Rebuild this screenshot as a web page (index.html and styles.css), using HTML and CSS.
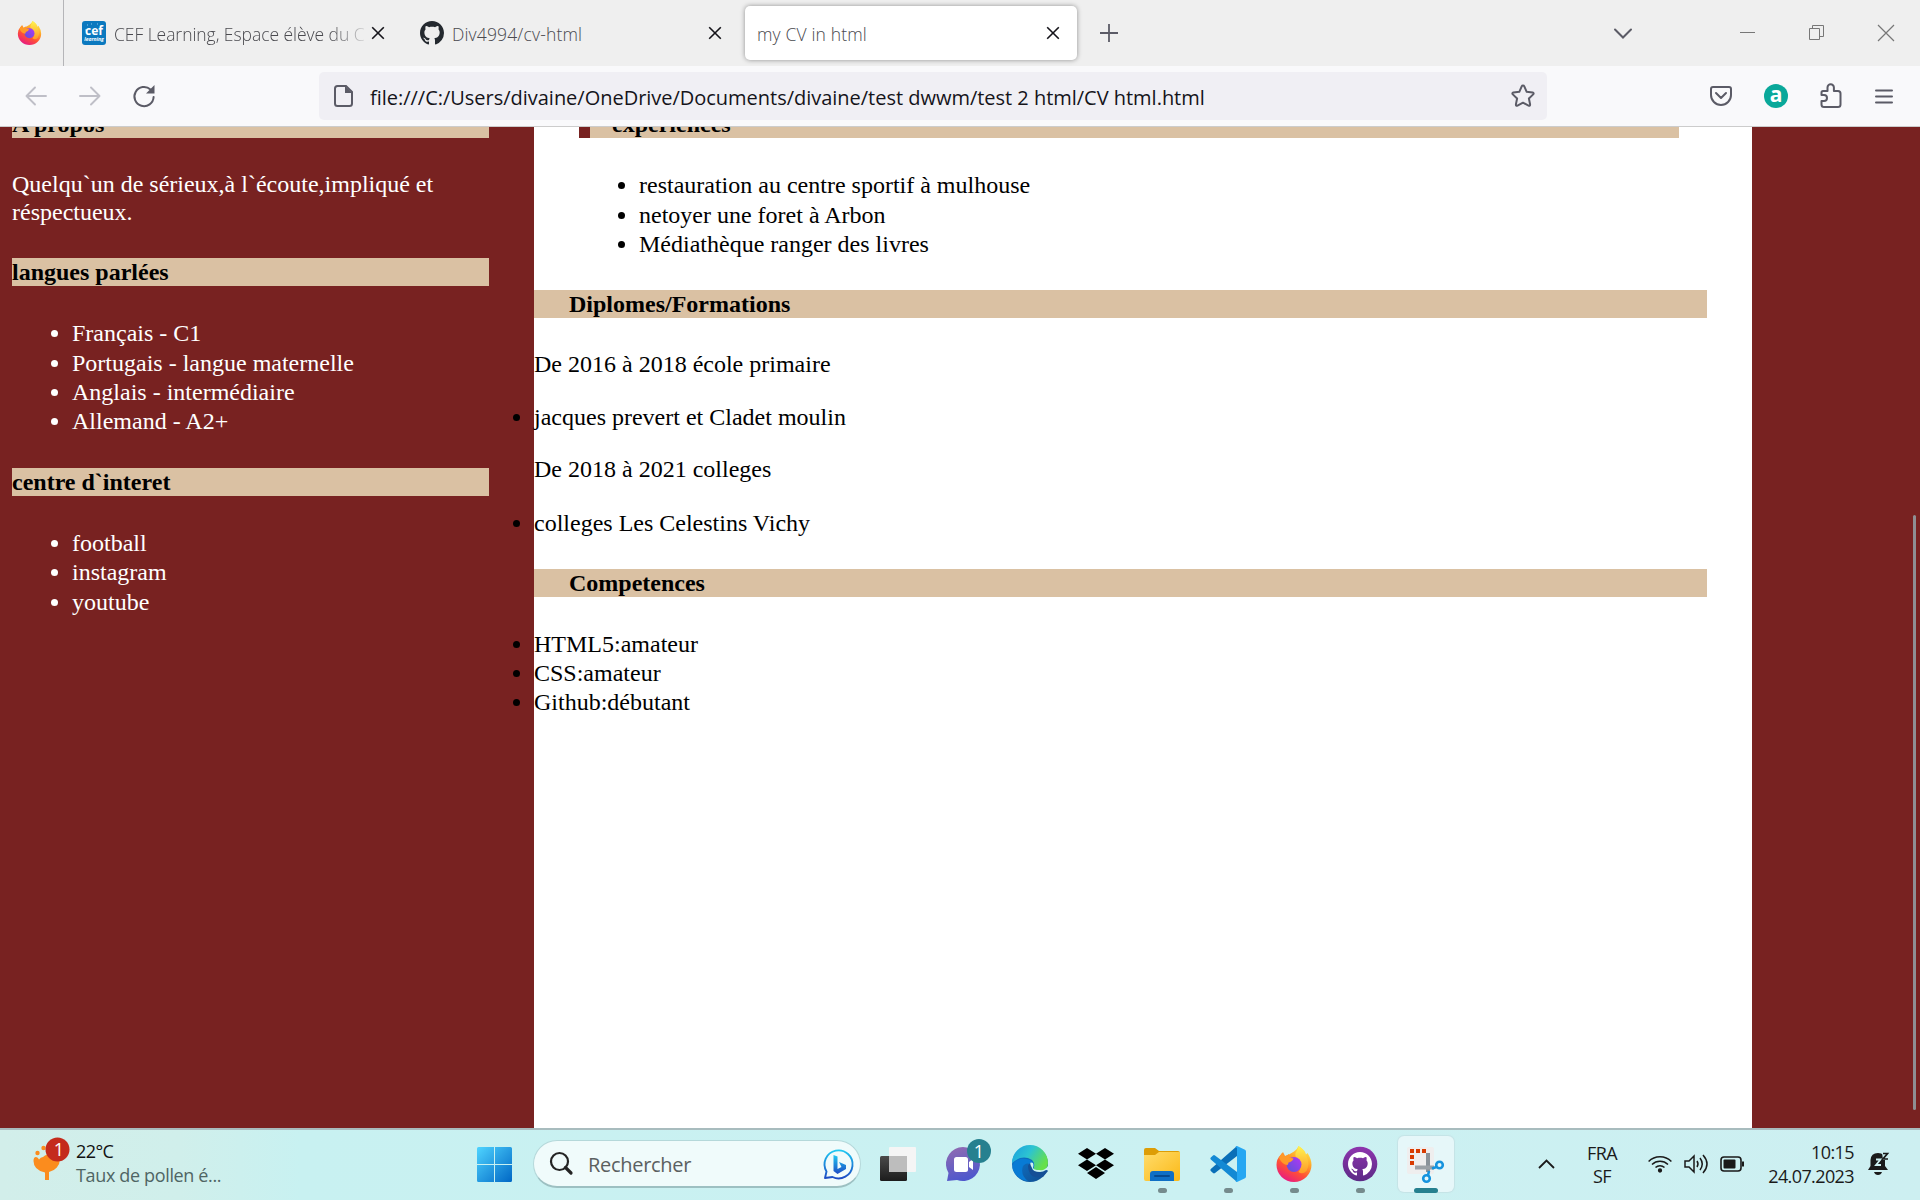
FILE: index.html
```html
<!DOCTYPE html>
<html lang="fr">
<head>
<meta charset="utf-8">
<title>my CV in html</title>
<link rel="stylesheet" href="styles.css">
</head>
<body>
<svg class="defs" width="0" height="0">
  <defs>
    <linearGradient id="ffBody" x1=".8" y1="0" x2=".25" y2="1"><stop offset="0" stop-color="#fff44f"/><stop offset=".35" stop-color="#ffa62a"/><stop offset=".65" stop-color="#ff5036"/><stop offset="1" stop-color="#e5158a"/></linearGradient>
    <linearGradient id="ffGlobe" x1="1" y1="0" x2="0" y2="1"><stop offset="0" stop-color="#b336f5"/><stop offset="1" stop-color="#5a53d8"/></linearGradient>
    <linearGradient id="ffFlame" x1="0" y1="0" x2="0" y2="1"><stop offset="0" stop-color="#fff44f"/><stop offset="1" stop-color="#ff9a28"/></linearGradient>
    <linearGradient id="win" x1="0" y1="0" x2="1" y2="1"><stop offset="0" stop-color="#4fd4ff"/><stop offset="1" stop-color="#0067c5"/></linearGradient>
    <linearGradient id="bing" x1="0" y1="0" x2="0" y2="1"><stop offset="0" stop-color="#1fc8f2"/><stop offset="1" stop-color="#1c4bc4"/></linearGradient>
    <linearGradient id="chat" x1="0" y1="0" x2=".3" y2="1"><stop offset="0" stop-color="#946cb0"/><stop offset="1" stop-color="#5058cc"/></linearGradient>
    <linearGradient id="edgeTop" x1="0" y1="0" x2="1" y2=".5"><stop offset="0" stop-color="#1a9de0"/><stop offset=".5" stop-color="#2cc3d2"/><stop offset="1" stop-color="#66e04a"/></linearGradient>
    <linearGradient id="edgeLow" x1="0" y1="0" x2="1" y2="1"><stop offset="0" stop-color="#0c7fd9"/><stop offset="1" stop-color="#114a8b"/></linearGradient>
    <linearGradient id="folder" x1="0" y1="0" x2="1" y2="1"><stop offset="0" stop-color="#ffdc6b"/><stop offset="1" stop-color="#fbb917"/></linearGradient>
    <linearGradient id="dark" x1="0" y1="0" x2="0" y2="1"><stop offset="0" stop-color="#4a4a4a"/><stop offset="1" stop-color="#1c1c1c"/></linearGradient>
    <linearGradient id="gh" x1="0" y1="0" x2="0" y2="1"><stop offset="0" stop-color="#8e35ae"/><stop offset="1" stop-color="#5c2a86"/></linearGradient>
    <symbol id="firefox" viewBox="0 0 36 36">
      <path d="M4.500 9 7 6l2 4 4-1.500 5-3Q21 4 22.500 0q6 3.500 7 9l2-2q4 6 4 12A17.500 17 0 0 1 .5 19Q.5 13 4.500 9z" fill="url(#ffBody)"/>
      <path d="M22.500 0q7 4 8 10 4 8 0 15-4 4-8 1 4-5 1-10-5-4-4-9 2-3 3-7z" fill="url(#ffFlame)"/>
      <circle cx="18" cy="18.500" r="7.500" fill="url(#ffGlobe)"/>
      <path d="M3 12 6 7l3 3.500 4-2.500v3.500l4.500 1q-1 3-5 4 0 1-1 2.500-5 0-8.500-7z" fill="#ff9a28"/>
    </symbol>
    <symbol id="octocat" viewBox="0 0 16 16"><path d="M8 0C3.580 0 0 3.580 0 8c0 3.540 2.290 6.530 5.470 7.590.4.070.55-.17.55-.38 0-.19-.01-.82-.01-1.490-2.010.37-2.530-.49-2.690-.94-.09-.23-.48-.94-.82-1.130-.28-.15-.68-.52-.01-.53.63-.01 1.080.58 1.230.82.72 1.210 1.870.87 2.330.66.070-.52.28-.87.51-1.070-1.780-.2-3.640-.89-3.640-3.950 0-.87.31-1.590.82-2.150-.08-.2-.36-1.020.08-2.120 0 0 .67-.21 2.200.82.64-.18 1.320-.27 2-.27s1.360.09 2 .27c1.530-1.040 2.200-.82 2.200-.82.44 1.100.16 1.920.08 2.120.51.56.82 1.270.82 2.150 0 3.070-1.870 3.750-3.650 3.950.29.25.54.73.54 1.480 0 1.070-.01 1.930-.01 2.200 0 .21.15.46.55.38A8.010 8.010 0 0 0 16 8c0-4.420-3.580-8-8-8z"/></symbol>
    <symbol id="cross" viewBox="0 0 14 14"><path d="M1.200 1.200l11.600 11.600M12.800 1.200L1.200 12.800" fill="none" stroke="#15141a" stroke-width="1.600"/></symbol>
  </defs>
</svg>

<header class="tabs">
  <div class="pinned"><svg width="25" height="24"><use href="#firefox"/></svg></div>
  <div class="tab tab-cef">
    <svg width="24" height="24" viewBox="0 0 24 24"><rect width="24" height="24" rx="3" fill="#0b79bf"/><text x="12" y="14" class="cef-a">cef</text><text x="12" y="20" class="cef-b">learning</text><path d="M5 4h1M9 3h1M15 3h1M3 9h1" stroke="#8cc8ec"/></svg>
    <span class="title fade t1">CEF Learning, Espace élève du C</span>
    <svg class="x" width="14" height="14"><use href="#cross"/></svg>
  </div>
  <div class="tab tab-git">
    <svg width="24" height="24" fill="#24292f"><use href="#octocat"/></svg>
    <span class="title t2">Div4994/cv-html</span>
    <svg class="x" width="14" height="14"><use href="#cross"/></svg>
  </div>
  <div class="tab active">
    <span class="title t3">my CV in html</span>
    <svg class="x" width="14" height="14"><use href="#cross"/></svg>
  </div>
  <svg class="plus" width="18" height="18" viewBox="0 0 18 18"><path d="M9 0v18M0 9h18" stroke="#5b5b66" stroke-width="1.800"/></svg>
  <div class="window">
    <svg class="list" width="18" height="11" viewBox="0 0 18 11"><path d="M1 1.500l8 8 8-8" fill="none" stroke="#5b5b66" stroke-width="2" stroke-linecap="round"/></svg>
    <svg width="16" height="16"><path d="M0 7.500h15" stroke="#777"/></svg>
    <svg width="16" height="16" fill="none" stroke="#777"><path d="M.5 3.500h10v11H.5zM3.500 3.500v-3h11v11h-4"/></svg>
    <svg width="16" height="16"><path d="M0 0l16 16M16 0L0 16" stroke="#777" stroke-width="1.200"/></svg>
  </div>
</header>

<nav class="toolbar">
  <svg class="back" width="22" height="20" viewBox="0 0 22 20" fill="none" stroke="#bfbfc7" stroke-width="1.900" stroke-linecap="round" stroke-linejoin="round"><path d="M21 10H1.500M10 1.500L1.500 10l8.500 8.500"/></svg>
  <svg class="fwd" width="22" height="20" viewBox="0 0 22 20" fill="none" stroke="#bfbfc7" stroke-width="1.900" stroke-linecap="round" stroke-linejoin="round"><path d="M1 10h19.500M12 1.500l8.500 8.500-8.500 8.500"/></svg>
  <svg class="reload" width="24" height="24" viewBox="0 0 24 24"><path d="M18.500 5.500A9.600 9.600 0 1 0 21.600 13" fill="none" stroke="#5b5b66" stroke-width="2" stroke-linecap="round"/><path d="M22.500 1v8.500H14z" fill="#5b5b66"/></svg>
  <div class="url">
    <svg width="20" height="22" viewBox="0 0 20 22"><path d="M3.500 1h8.500l6 6v11.500q0 2.500-2.500 2.500h-12Q1 21 1 18.500v-15Q1 1 3.500 1z" fill="none" stroke="#5b5b66" stroke-width="2"/><path d="M11 1v7h7z" fill="#5b5b66"/></svg>
    <span class="address">file:///C:/Users/divaine/OneDrive/Documents/divaine/test dwwm/test 2 html/CV html.html</span>
    <svg class="star" width="24" height="24" viewBox="0 0 24 24"><path d="M12 1.500q.9 0 1.300.9l2.400 5.400 5.900.7q1.700.5.6 1.900l-4.300 4.100 1.200 5.900q0 1.800-1.600 1.200L12 18.700l-5.500 2.900q-1.600.6-1.600-1.200l1.200-5.900-4.300-4.100q-1.100-1.400.6-1.900l5.900-.7 2.400-5.400q.4-.9 1.300-.9z" fill="none" stroke="#5b5b66" stroke-width="2" stroke-linejoin="round"/></svg>
  </div>
  <div class="extras">
    <svg width="22" height="20" viewBox="0 0 22 20" fill="none" stroke="#5b5b66" stroke-width="2" stroke-linecap="round" stroke-linejoin="round"><path d="M3 1h16q2 0 2 2v6a10 10 0 0 1-20 0V3q0-2 2-2zM6 7l5 5 5-5"/></svg>
    <span class="ext-a">a</span>
    <svg width="22" height="26" viewBox="0 0 22 26" fill="none" stroke="#5b5b66" stroke-width="2" stroke-linejoin="round"><path d="M3 8h4.500V4.500a3.200 3.200 0 0 1 6.400 0V8H18q2.500 0 2.500 2.500v11Q20.500 24 18 24H4q-2.500 0-2.500-2.500V18H4a3 3 0 0 0 0-6H1.500V9.500Q1.500 8 3 8z"/></svg>
    <svg width="18" height="15" viewBox="0 0 18 15"><path d="M1 1.500h16M1 7.500h16M1 13.500h16" stroke="#5b5b66" stroke-width="2" stroke-linecap="round"/></svg>
  </div>
</nav>

<main class="page">
  <aside class="side">
    <h4>A propos</h4>
    <p>Quelqu`un de sérieux,à l`écoute,impliqué et réspectueux.</p>
    <h4>langues parlées</h4>
    <ul>
      <li>Français - C1</li>
      <li>Portugais - langue maternelle</li>
      <li>Anglais - intermédiaire</li>
      <li>Allemand - A2+</li>
    </ul>
    <h4>centre d`interet</h4>
    <ul>
      <li>football</li>
      <li>instagram</li>
      <li>youtube</li>
    </ul>
  </aside>
  <section class="main">
    <div class="exp">
      <h4>experiences</h4>
      <ul>
        <li>restauration au centre sportif à mulhouse</li>
        <li>netoyer une foret à Arbon</li>
        <li>Médiathèque ranger des livres</li>
      </ul>
    </div>
    <h4>Diplomes/Formations</h4>
    <p>De 2016 à 2018 école primaire</p>
    <ul class="flush"><li>jacques prevert et Cladet moulin</li></ul>
    <p>De 2018 à 2021 colleges</p>
    <ul class="flush college"><li>colleges Les Celestins Vichy</li></ul>
    <h4 class="skills">Competences</h4>
    <ul class="flush">
      <li>HTML5:amateur</li>
      <li>CSS:amateur</li>
      <li>Github:débutant</li>
    </ul>
  </section>
  <div class="edge"><i class="thumb"></i></div>
</main>

<footer class="taskbar">
  <div class="weather">
    <svg width="38" height="44" viewBox="0 0 38 44"><path d="M.5 24q0-4 2.500-4 2 0 3 2.500Q7.500 20 10 20q3-3 8-3l9 5a13.500 13.500 0 0 1-11 13V43h-4v-7.500Q.5 33 .5 24z" fill="#fb8c1e"/><circle cx="4.500" cy="16" r="2.200" fill="#fb8c1e"/><circle cx="10.500" cy="11" r="2.200" fill="#fb8c1e"/><circle cx="24.500" cy="12.500" r="12" fill="#c42b1c"/><text x="26" y="18.500" class="badge">1</text></svg>
    <div class="lines"><span class="w1">22°C</span><span class="w2">Taux de pollen é...</span></div>
  </div>
  <svg class="start" width="35" height="35" viewBox="0 0 35 35"><path d="M1.500 0H17v17H0V1.500Q0 0 1.500 0zM18 0h15.500Q35 0 35 1.500V17H18zM0 18h17v17H1.500Q0 35 0 33.500zM18 18h17v15.500q0 1.500-1.500 1.500H18z" fill="url(#win)"/></svg>
  <div class="search">
    <svg width="23" height="23" viewBox="0 0 23 23" fill="none" stroke="#242424"><circle cx="9.500" cy="9.500" r="8.500" stroke-width="2.200"/><path d="M15.500 15.500l5.500 5.500" stroke-width="3.200" stroke-linecap="round"/></svg>
    <span>Rechercher</span>
    <svg class="bing" width="32" height="32" viewBox="0 0 32 32"><path d="M2 30l1.500-6.500A14 14 0 1 1 9.500 29z" fill="none" stroke="url(#bing)" stroke-width="1.900" stroke-linejoin="round"/><path d="M10.500 7l4 1.500v12.500l4-2-2.500-5 7 3v4L14.500 26l-4-3z" fill="url(#bing)"/></svg>
  </div>
  <div class="apps">
    <div class="app"><svg width="36" height="36" viewBox="0 0 36 36"><rect x="0" y="10" width="27" height="25" rx="1.500" fill="url(#dark)"/><rect x="9" y="1" width="27" height="25" rx="1" fill="#f5f5f5"/><path d="M9 10h18v16H9z" fill="#bdbdbd"/></svg></div>
    <div class="app chat"><svg width="36" height="36" viewBox="0 0 36 36"><path d="M1 35l1.500-8A17 17 0 1 1 11 34z" fill="url(#chat)"/><rect x="8" y="11" width="14" height="15" rx="2.500" fill="#fff"/><path d="M23 16l4-3v11l-4-3z" fill="#fff"/></svg><span class="count">1</span></div>
    <div class="app"><svg width="36" height="36" viewBox="0 0 36 36"><circle cx="18" cy="18" r="18" fill="url(#edgeLow)"/><path d="M0 17A18 18 0 0 1 36 17q0 7-7 8-7 1-8-2 3-5-1-9Q10 8 0 17z" fill="url(#edgeTop)"/><path d="M21 23Q17 14 11 20q-3 9 5 15-10-1-15-11-2-8 7-11 9-1 13 3 2 4 0 7z" fill="#087bd5"/><path d="M20 22q1 4 8 4 4 0 7-2l1 1-5 6Q17 34 16 20q1-3 4-3 2 2 0 5z" fill="#154f96"/><path d="M20 22q1 4 8 4 3 0 6-2h2v-4q-3 5-9 4-5 0-6-2 1-3 0-5-5-2-1 5z" fill="#cbf1f1"/></svg></div>
    <div class="app"><svg width="36" height="36" viewBox="0 0 36 36"><path d="M9 2l9 5.700-9 5.700-9-5.700zM27 2l9 5.700-9 5.700-9-5.700zM9 13.400l9 5.800-9 5.700-9-5.700zM27 13.400l9 5.800-9 5.700-9-5.700zM18 21l9 6-9 6-9-6z"/></svg></div>
    <div class="app"><svg width="36" height="36" viewBox="0 0 36 36"><path d="M0 4q0-2 2-2h9l4 3h19q2 0 2 2v6H0z" fill="#dd9d06"/><path d="M0 9h11l4-3h21v27q0 2-2 2H2q-2 0-2-2z" fill="url(#folder)"/><path d="M6 35V28q0-3 3-3h18q3 0 3 3v7z" fill="#0f6fc5"/><path d="M11 30h14" stroke="#064a8f" stroke-width="2" stroke-linecap="round"/></svg><i class="run"></i></div>
    <div class="app"><svg width="36" height="36" viewBox="0 0 36 36"><path d="M27 0v10L5 27q-1 .8-2 0l-2.200-2q-1-1 0-2z" fill="#0a6fb8"/><path d="M27 36V26L5 9.500q-1-.8-2 0l-2.200 2q-1 1 0 2z" fill="#1389d4"/><path d="M27 0l8 3.800q1 .6 1 1.700v25q0 1.100-1 1.700L27 36q-1 0-1.500-1l1.500-1V2L25.500 1Q26 0 27 0z" fill="#26a7f2"/></svg><i class="run"></i></div>
    <div class="app"><svg width="36" height="36"><use href="#firefox"/></svg><i class="run"></i></div>
    <div class="app"><svg width="36" height="36" viewBox="0 0 36 36"><circle cx="18" cy="18" r="17.300" fill="url(#gh)"/><svg x="6" y="6" width="24" height="24" fill="#fff"><use href="#octocat"/></svg></svg><i class="run"></i></div>
    <div class="app on"><svg width="38" height="38" viewBox="0 0 38 38"><rect x="0" y="1" width="27" height="27" rx="2" fill="#efeeee"/><path d="M3 3h4v4H3zM9 3h4v4H9zM15 3h4v4h-4zM3 9h4v4H3zM3 15h4v4H3z" fill="#d83b01"/><path d="M21 7v19" stroke="#8a9299" stroke-width="4"/><path d="M8 21.500h19" stroke="#9ba1a6" stroke-width="4"/><g fill="none" stroke="#1593de" stroke-width="2.600"><circle cx="32.500" cy="19" r="3.300"/><circle cx="19.500" cy="32.500" r="3.300"/><path d="M25 22.500l4.500-1.500M22 25l-1 4.500"/></g></svg><i class="run wide"></i></div>
  </div>
  <div class="tray">
    <svg class="up" width="17" height="10" viewBox="0 0 17 10"><path d="M1 9l7.500-7.500L16 9" fill="none" stroke="#1a1a1a" stroke-width="1.800"/></svg>
    <div class="lang"><span>FRA</span><span>SF</span></div>
    <svg class="wifi" width="24" height="19" viewBox="0 0 24 19" fill="none" stroke="#1a1a1a" stroke-width="1.500"><path d="M.6 7.500a16 16 0 0 1 22.800 0M4 10.500a11.500 11.500 0 0 1 16 0M7.500 13.500a6.500 6.500 0 0 1 9 0"/><circle cx="12" cy="16.500" r="1.400" fill="#1a1a1a"/></svg>
    <svg class="vol" width="25" height="20" viewBox="0 0 25 20" fill="none" stroke="#1a1a1a" stroke-width="1.500"><path d="M1 7h4l5-5v16l-5-5H1zM13 7q2 3 0 6M16 4q4.500 6 0 12M19 1q8 9 0 18"/></svg>
    <svg class="bat" width="25" height="16" viewBox="0 0 25 16"><rect x="1" y="1" width="20" height="14" rx="3" fill="none" stroke="#1a1a1a" stroke-width="1.600"/><rect x="3.500" y="3.500" width="12" height="9" rx="1" fill="#1a1a1a"/><path d="M22 5.500h2v5h-2z" fill="#1a1a1a"/></svg>
    <div class="clock"><span>10:15</span><span class="date">24.07.2023</span></div>
    <svg class="bell" width="22" height="24" viewBox="0 0 22 24"><path d="M0 18l2.500-4V8Q3 1 10 1q7 0 7 7v6l3 4zM6 20h8q-1 3-4 3t-4-3z" fill="#1a1a1a"/><path d="M8 7.500h4.500L8 13h5" fill="none" stroke="#cdf0f1" stroke-width="1.800"/><path d="M14 0h8v8h-7z" fill="#cdf0f1"/><path d="M15 1.500h4.500L15 7h5" fill="none" stroke="#1a1a1a" stroke-width="1.700"/></svg>
  </div>
</footer>
</body>
</html>
```
FILE: styles.css
```css
* { box-sizing: border-box; }
body {
  margin: 0;
  width: 1920px;
  height: 1200px;
  overflow: hidden;
  display: flex;
  flex-direction: column;
  font-family: "Open Sans", "Noto Sans", sans-serif;
}
svg { display: block; flex: none; overflow: visible; }
.defs { position: absolute; }

.tabs { height: 66px; flex: none; display: flex; align-items: center; background: #efefef; }
.pinned { width: 64px; height: 66px; padding: 21px 0 0 17px; border-right: 1px solid #b5b5b8; }
.tab { display: flex; align-items: center; height: 54px; }
.tab-cef { width: 338px; padding: 0 16px 0 18px; }
.tab-git { width: 337px; padding: 0 17px 0 18px; }
.tab-cef .x { margin-left: 6px; }
.tab-git .x, .active .x { margin-left: auto; }
.active {
  width: 332px;
  margin-left: 6px;
  padding: 0 17px 0 12px;
  background: #fff;
  border-radius: 5px;
  box-shadow: 0 0 5px rgba(0, 0, 0, .4);
}
.title { padding-top: 1px; font-size: 17.5px; font-weight: 300; color: #4a4a4f; white-space: nowrap; line-height: 24px; }
.tab svg + .title { margin-left: 8px; }
.fade { width: 251px; overflow: hidden; -webkit-mask-image: linear-gradient(90deg, #000 215px, transparent 258px); mask-image: linear-gradient(90deg, #000 215px, transparent 258px); }
.t1 { letter-spacing: -.05px; }
.t2, .t3 { letter-spacing: .15px; }
.plus { margin-left: 23px; }
.window { margin-left: auto; display: flex; align-items: center; padding-right: 26px; gap: 53px; }
.window .list { margin-right: 55px; }
.cef-a { font: bold 12px "Open Sans", sans-serif; fill: #fff; text-anchor: middle; }
.cef-b { font: italic bold 5px "Open Sans", sans-serif; fill: #fff; text-anchor: middle; }

.toolbar { height: 61px; flex: none; display: flex; align-items: center; background: #f9f9fb; border-bottom: 1px solid #ccc; }
.back { margin-left: 25px; }
.fwd { margin-left: 32px; }
.reload { margin-left: 31px; }
.url { width: 1228px; height: 48px; margin-left: 163px; padding: 0 12px 0 15px; display: flex; align-items: center; background: #f0eff4; border-radius: 5px; }
.address { margin-left: 16px; padding-top: 2px; font-size: 20px; color: #15141a; white-space: nowrap; letter-spacing: -.02px; }
.star { margin-left: auto; }
.extras { margin-left: auto; display: flex; align-items: center; padding-right: 27px; }
.ext-a { width: 24px; height: 24px; margin: 0 32px; border-radius: 50%; background: #0aa89a; color: #fff; font: bold 21px/20px "Open Sans", sans-serif; text-align: center; }
.extras svg:last-child { margin-left: 33px; }

.page { height: 1001px; flex: none; display: flex; overflow: hidden; background: #782221; font: 24px/28px "Liberation Serif", serif; }
.page h4 { margin: 0; height: 28px; font-size: 24px; line-height: 28px; background: #dac1a3; color: #000; }
.page ul { margin: 0; padding: 0 0 0 60px; line-height: 29.33px; }
.page p { margin: 0; }
.side { width: 534px; padding-left: 12px; margin-top: -17px; color: #fff; }
.side h4 { width: 477px; }
.side p { width: 440px; padding: 32px 0; }
.side ul { padding-top: 33.4px; padding-bottom: 30.8px; }
.main { width: 1218px; background: #fff; color: #000; }
.exp { margin: -17px 0 0 45px; }
.exp h4 { width: 1100px; border-left: 11px solid #782221; padding-left: 22px; }
.exp ul { padding-top: 33.4px; padding-bottom: 30.6px; }
.main > h4 { width: 1173px; padding-left: 35px; }
.main > p { padding: 32px 0 0; }
.main > .flush { padding-left: 0; padding-top: 25px; }
.main > .flush + p { padding-top: 23px; }
.main > .college { padding-top: 26px; }
.main > .skills { margin-top: 30px; }
.main > .skills + .flush { padding-top: 33.2px; }
.edge { flex: 1; padding: 388px 4px 0 0; }
.thumb { display: block; width: 3px; height: 595px; margin-left: auto; border-radius: 2px; background: #8f8f93; }

.taskbar {
  height: 72px;
  flex: none;
  display: flex;
  border-top: 2px solid #a8bcbe;
  background: linear-gradient(90deg, #d2eeea 0, #d0efeb 180px, #c8f1f1 300px, #cbf1f2 1200px, #cdeff1 100%);
}
.weather { width: 477px; padding: 7px 0 0 33px; display: flex; gap: 5px; }
.lines { display: flex; flex-direction: column; font-size: 18px; line-height: 24px; padding-top: 2px; }
.w1 { color: #111; letter-spacing: -.6px; }
.w2 { color: #4f6564; letter-spacing: -.35px; }
.badge { font: 18px "Open Sans", sans-serif; fill: #fff; text-anchor: middle; }
.start { margin-top: 17px; }
.search { width: 328px; height: 48px; margin: 10px 0 0 21px; padding: 0 5px 0 16px; display: flex; align-items: center; border: 1px solid #b5d8da; border-bottom: 2px solid #9dc0c2; border-radius: 24px; background: #f0fbfb; }
.search span { margin-left: 15px; padding-top: 2px; font-size: 20px; color: #5b6060; letter-spacing: -.3px; }
.bing { margin-left: auto; }
.apps { display: flex; margin: 6px 0 0 9px; gap: 10px; }
.app { position: relative; width: 56px; height: 56px; display: flex; justify-content: center; padding-top: 10px; border-radius: 6px; }
.on { background: #e6f7f9; box-shadow: 0 0 1px 1px #c5e3e6; }
.count { position: absolute; left: 31px; top: 3px; width: 24px; height: 24px; border-radius: 50%; background: #26808f; color: #fff; font-size: 18px; line-height: 24px; text-align: center; }
.run { position: absolute; left: 24px; bottom: -1px; width: 9px; height: 5px; border-radius: 3px; background: #758b8d; }
.run.wide { left: 16px; width: 24px; background: #26808f; }
.tray { flex: 1; display: flex; align-items: center; padding: 0 30px 0 84px; font-size: 18px; line-height: 23px; color: #1a1a1a; }
.lang { width: 36px; margin: -1px 0 0 29px; display: flex; flex-direction: column; align-items: center; letter-spacing: -.6px; }
.up { margin-top: -3px; }
.wifi { margin-left: 28px; margin-top: -4px; }
.vol { margin-left: 12px; margin-top: -2px; }
.bat { margin-left: 11px; margin-top: -2px; }
.clock { margin: -2px 0 0 auto; display: flex; flex-direction: column; align-items: flex-end; line-height: 24px; letter-spacing: -.6px; }
.bell { margin-left: 14px; margin-top: -2px; }
```
